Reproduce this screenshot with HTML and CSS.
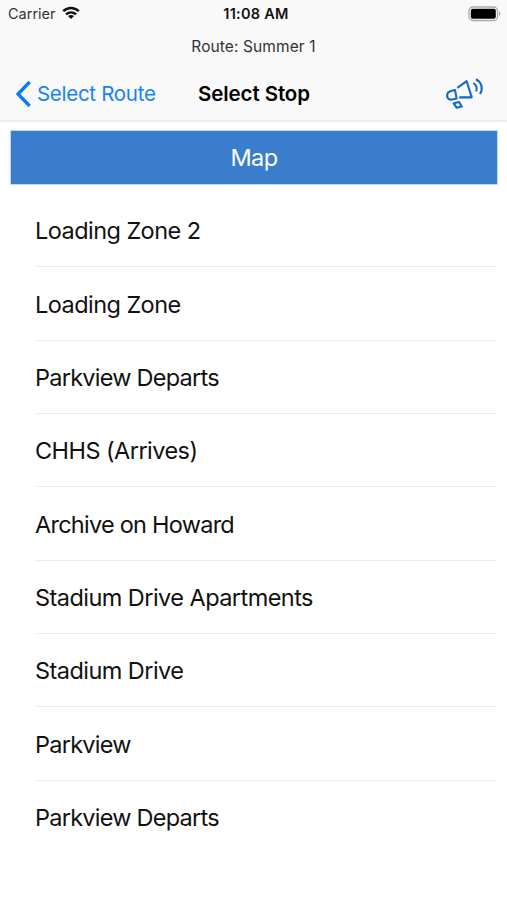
FILE: index.html
```html
<!DOCTYPE html>
<html lang="en">
<head>
<meta charset="utf-8">
<title>Select Stop</title>
<link rel="stylesheet" href="styles.css">
</head>
<body>
<header class="header">
  <div class="status">
    <div class="carrier"><span>Carrier</span>
      <svg class="wifi" width="18" height="14" viewBox="0 0 18 14" fill="none" stroke="#111" stroke-width="2.5"><path d="M1.2 5.2C5.8.8 12.2.8 16.8 5.2M4 8.4c2.9-2.7 7.1-2.7 10 0"/><path d="M9 13 6 10c1.7-1.4 4.3-1.4 6 0z" fill="#111" stroke="none"/></svg>
    </div>
    <div class="time">11:08 AM</div>
    <svg class="battery" width="33" height="16" viewBox="0 0 33 16"><rect x="1" y="1" width="28.5" height="13.5" rx="4" fill="#fff" stroke="#aaa" stroke-width="1.3"/><rect x="2.8" y="2.8" width="25" height="10" rx="2" fill="#000"/><path d="M31 5.8c1.8.7 1.8 3.4 0 4.1z" fill="#999"/></svg>
  </div>
  <div class="route">Route: Summer 1</div>
  <nav class="nav">
    <a class="back"><svg width="17" height="28" viewBox="0 0 17 28" fill="none" stroke="#087cf5" stroke-width="3.3"><path d="M14.7 2 3 14l11.7 12"/></svg><span>Select Route</span></a>
    <h1 class="title">Select Stop</h1>
    <svg class="horn" width="42" height="36" viewBox="0 0 42 36" fill="none" stroke="#1668c9" stroke-width="2.1" stroke-linejoin="round"><path d="M13.3 11.8 22.7 5.2 27.7 21.4 15.2 21.4M11 14 7 15C1.2 16.7 2.2 24.6 8 23.5L12.6 22.4ZM9.7 27.3 15 26 17.8 30.5 12.7 31.8Z"/><path d="M29.4 7.2C32.3 8.8 33.6 12.3 32.1 15.4M32 3.2C37.5 6 39.5 12.8 36 18"/></svg>
  </nav>
</header>
<main>
  <button class="map">Map</button>
  <ul class="stops">
    <li>Loading Zone 2</li>
    <li>Loading Zone</li>
    <li class="tight">Parkview Departs</li>
    <li>CHHS (Arrives)</li>
    <li class="tight">Archive on Howard</li>
    <li>Stadium Drive Apartments</li>
    <li>Stadium Drive</li>
    <li class="tight">Parkview</li>
    <li class="tight">Parkview Departs</li>
  </ul>
</main>
</body>
</html>
```
FILE: styles.css
```css
* { box-sizing: border-box; }
body { margin: 0; height: 900px; overflow: hidden; background: #fff; color: #111; font-family: Inter, "Liberation Sans", sans-serif; }
.header { height: 122px; background: #f9f9f9; border-bottom: 2px solid #ededed; }
.status { height: 27px; display: grid; grid-template-columns: 1fr auto 1fr; align-items: center; padding: 0 6px 0 8px; }
.carrier { display: flex; align-items: center; gap: 6px; font-size: 14.5px; color: #333; }
.wifi { margin-top: -1px; }
.time { font-size: 14.5px; font-weight: 600; letter-spacing: .25px; padding-left: 3px; }
.battery { justify-self: end; margin-top: 0; }
.route { height: 39px; line-height: 40px; text-align: center; font-size: 15.5px; letter-spacing: .1px; color: #333; }
.nav { height: 55px; display: grid; grid-template-columns: 1fr auto 1fr; align-items: center; padding: 0 21px 0 15px; }
.back { display: flex; align-items: center; gap: 5px; color: #1683f5; font-size: 20.5px; letter-spacing: -.28px; }
.title { margin: 0; padding-left: 7px; font-size: 20.5px; font-weight: 600; letter-spacing: -.1px; color: #000; }
.horn { justify-self: end; }
.map { display: block; width: 486px; height: 53px; margin: 9px 0 0 11px; padding: 0; border: 0; background: #397dcc; box-shadow: 0 0 0 1px #bbdcf8; color: #fff; font: 400 23.5px Inter, sans-serif; letter-spacing: -.6px; }
.stops { list-style: none; margin: 10px 10px 0 35px; padding: 0; }
.stops li { height: 73.35px; display: flex; align-items: center; border-bottom: 1.5px solid #ececec; padding-top: 1px; font-size: 23.5px; letter-spacing: -.55px; }
.stops .tight { letter-spacing: -.75px; }
.stops li:last-child { border-bottom: 0; padding-top: 0; }
```
